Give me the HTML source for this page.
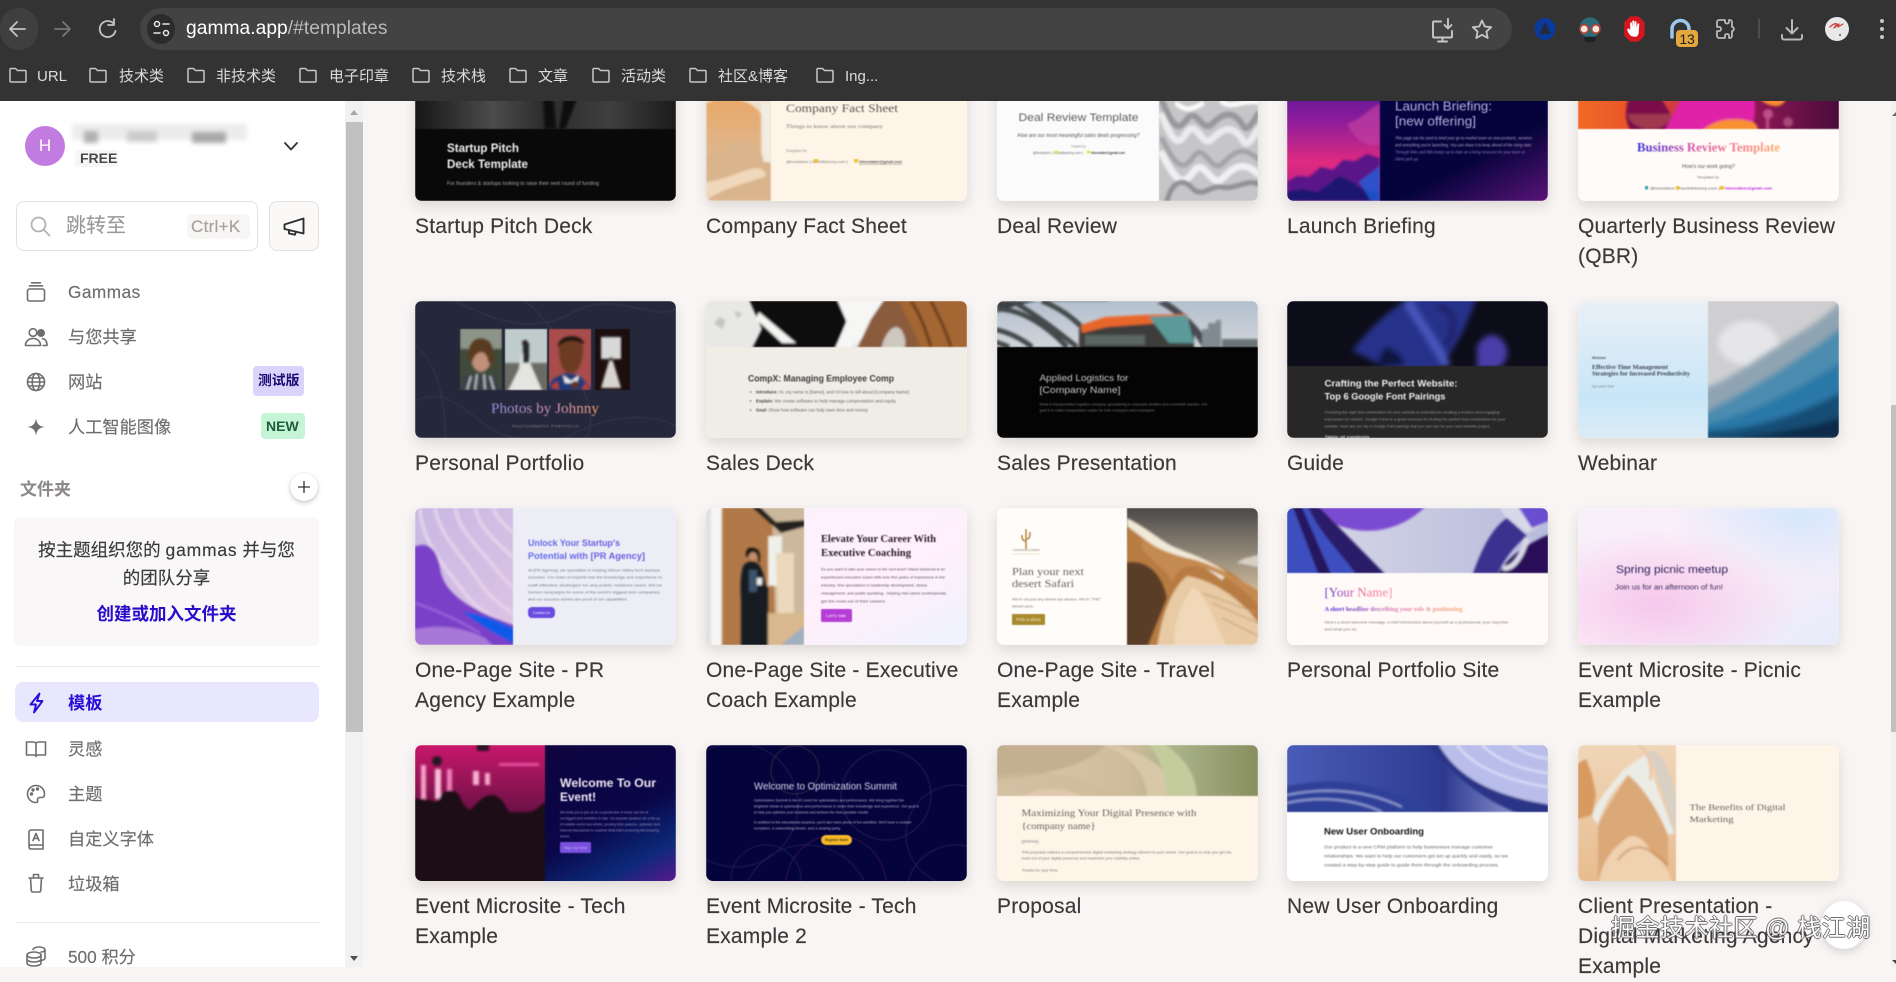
<!DOCTYPE html>
<html lang="zh">
<head>
<meta charset="utf-8">
<title>gamma.app/#templates</title>
<style>
*{box-sizing:border-box}
html,body{margin:0;padding:0;width:1896px;height:967px;overflow:hidden;background:#f8f5f4;font-family:"Liberation Sans","Noto Sans CJK SC",sans-serif}
.a{position:absolute}
.t{position:absolute;white-space:nowrap;line-height:24px}
.bm{position:absolute;top:65px;color:#dcdcdc;font-size:15px;line-height:24px;white-space:nowrap}
.fd{position:absolute;top:65px;width:20px;height:20px}
.nav{position:absolute;left:68px;font-size:17.200px;line-height:24px;color:#6f6d6c;white-space:nowrap;-webkit-text-stroke:.15px #6f6d6c}
.ic{position:absolute;left:24px;width:24px;height:24px;fill:none;stroke:#6e6e6e;stroke-width:1.6;stroke-linecap:round;stroke-linejoin:round}
.c{position:absolute;width:261px;height:137px;border-radius:7px;overflow:hidden;box-shadow:0 5px 12px rgba(60,40,30,.14)}
.c>svg{display:block;width:261px;height:137px;filter:blur(.4px)}
.l{position:absolute;width:270px;font-size:21px;letter-spacing:.2px;line-height:30px;color:#3b3838;white-space:nowrap;-webkit-text-stroke:.15px #3b3838}
svg text{font-family:"Liberation Sans",sans-serif}
svg text.f{font-family:"Liberation Serif",serif}
</style>
</head>
<body>
<svg width="0" height="0" style="position:absolute">
<defs>
<filter id="b" x="-5%" y="-5%" width="110%" height="110%"><feGaussianBlur stdDeviation="1.100"/></filter>
<filter id="b2" x="-10%" y="-10%" width="120%" height="120%"><feGaussianBlur stdDeviation="3"/></filter>
<linearGradient id="g1" x1="0" x2="1" y1="0" y2="0"><stop offset="0" stop-color="#161616"/><stop offset=".3" stop-color="#4c4c4c"/><stop offset=".5" stop-color="#2b2b2b"/><stop offset=".75" stop-color="#3f3f3f"/><stop offset="1" stop-color="#1b1b1b"/></linearGradient>
<linearGradient id="g2" x1="0" x2="0" y1="0" y2="1"><stop offset="0" stop-color="#e8a868"/><stop offset=".6" stop-color="#dfb68c"/><stop offset="1" stop-color="#c9a078"/></linearGradient>
<linearGradient id="g3" x1="0" x2="1" y1="0" y2="1"><stop offset="0" stop-color="#06054a"/><stop offset=".7" stop-color="#04033a"/><stop offset="1" stop-color="#5a1478"/></linearGradient>
<linearGradient id="g4" x1="0" x2="0" y1="0" y2="1"><stop offset="0" stop-color="#3a1490"/><stop offset=".4" stop-color="#8a1c9c"/><stop offset=".72" stop-color="#e02a80"/><stop offset="1" stop-color="#a8208c"/></linearGradient>
<linearGradient id="g5" x1="0" x2="1" y1="0" y2="0"><stop offset="0" stop-color="#f06a24"/><stop offset=".25" stop-color="#e8502c"/><stop offset=".55" stop-color="#a81c60"/><stop offset="1" stop-color="#4a0c3c"/></linearGradient>
<linearGradient id="g6" x1="0" x2="1" y1="0" y2="0"><stop offset="0" stop-color="#3b33d8"/><stop offset=".4" stop-color="#d85aa8"/><stop offset=".7" stop-color="#f47f90"/><stop offset="1" stop-color="#fbb070"/></linearGradient>
<linearGradient id="g7" x1="0" x2="1" y1="0" y2="0"><stop offset="0" stop-color="#8f8fd8"/><stop offset=".6" stop-color="#d08cb0"/><stop offset="1" stop-color="#e8a070"/></linearGradient>
<linearGradient id="g8" x1="0" x2="0" y1="0" y2="1"><stop offset="0" stop-color="#eaf0f6"/><stop offset=".7" stop-color="#c8e6f8"/><stop offset="1" stop-color="#dcecf6"/></linearGradient>
<linearGradient id="g10" x1="0" x2="1" y1="0" y2="0"><stop offset="0" stop-color="#6470e8"/><stop offset="1" stop-color="#6a5ae0"/></linearGradient>
<linearGradient id="g11" x1="0" x2="1" y1="0" y2="0"><stop offset="0" stop-color="#5a3ad0"/><stop offset=".6" stop-color="#f070a0"/><stop offset="1" stop-color="#f890a0"/></linearGradient>
<linearGradient id="g12" x1="0" x2="1" y1="0" y2="0"><stop offset="0" stop-color="#3a2ad8"/><stop offset=".5" stop-color="#e07ab0"/><stop offset="1" stop-color="#f8a870"/></linearGradient>
<linearGradient id="g13" x1="0" x2="1" y1="0" y2="1"><stop offset="0" stop-color="#f7f0fc"/><stop offset=".5" stop-color="#fdeef8"/><stop offset="1" stop-color="#e6ecfb"/></linearGradient>
<radialGradient id="g14" cx=".3" cy=".7" r=".55"><stop offset="0" stop-color="#f6c8ec"/><stop offset="1" stop-color="#f6c8ec" stop-opacity="0"/></radialGradient>
<radialGradient id="g15" cx=".85" cy=".05" r=".5"><stop offset="0" stop-color="#d6e8fc"/><stop offset="1" stop-color="#d6e8fc" stop-opacity="0"/></radialGradient>
<linearGradient id="g16" x1="0" x2="0" y1="0" y2="1"><stop offset="0" stop-color="#c8186c"/><stop offset=".55" stop-color="#601040"/><stop offset="1" stop-color="#2a0a1e"/></linearGradient>
<linearGradient id="g17" x1="0" x2="1" y1="0" y2="1"><stop offset="0" stop-color="#12043a"/><stop offset=".65" stop-color="#0a0648"/><stop offset=".85" stop-color="#0c2a78"/><stop offset="1" stop-color="#5a1890"/></linearGradient>
<linearGradient id="g18" x1="0" x2="1" y1="0" y2="0"><stop offset="0" stop-color="#d8c8a8"/><stop offset=".5" stop-color="#d0bc9c"/><stop offset=".7" stop-color="#a8b088"/><stop offset="1" stop-color="#888f5e"/></linearGradient>
<linearGradient id="g19" x1="0" x2="1" y1="0" y2="0"><stop offset="0" stop-color="#4a5cb8"/><stop offset=".6" stop-color="#2e3a90"/><stop offset="1" stop-color="#b0b8e8"/></linearGradient>
<linearGradient id="g20" x1="0" x2="0" y1="0" y2="1"><stop offset="0" stop-color="#4a4a4a"/><stop offset=".6" stop-color="#cbb89c"/><stop offset="1" stop-color="#f4ead8"/></linearGradient>
<linearGradient id="g21" x1="0" x2="1" y1="0" y2="1"><stop offset="0" stop-color="#fdf0ff"/><stop offset=".6" stop-color="#fff0fb"/><stop offset="1" stop-color="#eef4ff"/></linearGradient>
<linearGradient id="g22" x1="0" x2="1" y1="0" y2="1"><stop offset="0" stop-color="#c8b8e4"/><stop offset="1" stop-color="#dcc4e4"/></linearGradient>
<linearGradient id="g23" x1="0" x2="0" y1="0" y2="1"><stop offset="0" stop-color="#b4c0ce"/><stop offset="1" stop-color="#d0d4da"/></linearGradient>
<linearGradient id="g25" x1="0" x2="1" y1="0" y2="0"><stop offset="0" stop-color="#d8d8e8"/><stop offset="1" stop-color="#b8bcdc"/></linearGradient>
<linearGradient id="g26" x1="0" x2="0" y1="0" y2="1"><stop offset="0" stop-color="#f0d6b8"/><stop offset="1" stop-color="#e8bc90"/></linearGradient>
</defs>
</svg>

<div class="c" style="left:415px;top:64px"><svg viewBox="0 0 261 137">
<rect width="261" height="137" fill="#090909"/>
<svg width="261" height="65" viewBox="0 0 261 65"><rect width="261" height="65" fill="url(#g1)"/><g filter="url(#b)"><path d="M128 30h10l3 35h-11zM150 30h14l-14 35h-6z" fill="#080808"/></g></svg>
<text x="32" y="88" font-size="11.500" font-weight="700" fill="#f0f0f0" textLength="72" lengthAdjust="spacingAndGlyphs">Startup Pitch</text>
<text x="32" y="104" font-size="11.500" font-weight="700" fill="#f0f0f0" textLength="81" lengthAdjust="spacingAndGlyphs">Deck Template</text>
<text x="32" y="121" font-size="5.500" fill="#a8a8a8" textLength="152" lengthAdjust="spacingAndGlyphs">For founders &amp; startups looking to raise their next round of funding</text>
</svg></div>
<div class="c" style="left:706px;top:64px"><svg viewBox="0 0 261 137">
<rect width="261" height="137" fill="#fef5e8"/>
<svg width="65" height="137" viewBox="0 0 65 137"><rect width="65" height="137" fill="#efe0cc"/><g filter="url(#b)">
<path d="M0 40C15 30 45 34 55 50V100C35 118 15 118 0 124z" fill="url(#g2)"/><path d="M0 100C15 85 30 75 40 78C50 82 55 92 65 100V137H0z" fill="#d9b48c"/><path d="M0 118C20 116 35 106 50 104C56 104 60 108 60 112C40 120 15 124 0 137z" fill="#f0d8bc"/><path d="M55 38h10v60h-8z" fill="#f2ece2"/></g></svg>
<text class="f" x="80" y="48" font-size="12" fill="#5a5650" textLength="112" lengthAdjust="spacingAndGlyphs">Company Fact Sheet</text>
<text class="f" x="80" y="64" font-size="5.500" fill="#77736c" textLength="97" lengthAdjust="spacingAndGlyphs">Things to know about our company</text>
<text class="f" x="80" y="88" font-size="4" fill="#888" textLength="21" lengthAdjust="spacingAndGlyphs">Template by</text>
<text x="80" y="99" font-size="3.600" fill="#777" textLength="62" lengthAdjust="spacingAndGlyphs">@lovelabor | havitdfactory.com |</text>
<rect x="108" y="95" width="4" height="3.500" fill="#f0c030"/><rect x="148" y="95" width="4" height="3.500" fill="#f0c030"/>
<text x="153" y="99" font-size="3.600" font-weight="700" fill="#555" textLength="43" lengthAdjust="spacingAndGlyphs" text-decoration="underline">hilovelabor@gmail.com</text>
</svg></div>
<div class="c" style="left:997px;top:64px"><svg viewBox="0 0 261 137">
<rect width="261" height="137" fill="#fbfbfb"/>
<svg x="162" width="99" height="137" viewBox="162 0 99 137"><rect x="162" width="99" height="137" fill="#c6c6c9"/><g filter="url(#b)" fill="none" stroke-linecap="round">
<path d="M165 37C175 60 180 70 190 55C200 42 205 70 215 60C225 50 235 45 245 60C250 70 255 60 261 50" stroke="#98989c" stroke-width="6"/>
<path d="M165 52C175 75 180 85 190 68C200 55 205 85 215 75C225 65 235 60 245 75C250 85 255 75 261 65" stroke="#ebebed" stroke-width="7"/>
<path d="M165 75C178 100 185 110 197 92C207 78 215 110 225 100C235 90 245 80 261 95" stroke="#a4a4a8" stroke-width="5"/>
<path d="M165 90C178 115 185 125 197 107C207 93 215 125 225 115C235 105 245 95 261 110" stroke="#f0f0f2" stroke-width="7"/>
<path d="M170 137C175 118 185 113 195 124C205 135 215 120 225 123C238 126 250 115 261 120" stroke="#909094" stroke-width="5"/>
<path d="M180 40C190 48 195 45 205 40M225 38C235 45 245 36 261 38" stroke="#fafafa" stroke-width="5"/>
</g></svg>
<text x="81.500" y="57" text-anchor="middle" font-size="11" fill="#5e5e5e" textLength="120" lengthAdjust="spacingAndGlyphs">Deal Review Template</text>
<text x="81.500" y="73" text-anchor="middle" font-size="5.500" font-style="italic" fill="#555" textLength="122" lengthAdjust="spacingAndGlyphs">How are our most meaningful sales deals progressing?</text>
<text x="81.500" y="83.500" text-anchor="middle" font-size="3.500" fill="#888" textLength="15" lengthAdjust="spacingAndGlyphs">Created by</text>
<text x="36" y="90" font-size="3.500" fill="#666" textLength="50" lengthAdjust="spacingAndGlyphs">@lovelabor | havitdfactory.com |</text>
<rect x="58" y="86.500" width="3" height="3" fill="#e8e040"/><rect x="90" y="86.500" width="3" height="3" fill="#e8e040"/>
<text x="94" y="90" font-size="3.500" font-weight="700" fill="#444" textLength="34" lengthAdjust="spacingAndGlyphs">hilovelabor@gmail.com</text>
</svg></div>
<div class="c" style="left:1287px;top:64px"><svg viewBox="0 0 261 137">
<rect width="261" height="137" fill="url(#g3)"/>
<svg width="93" height="137" viewBox="0 0 93 137"><rect width="93" height="137" fill="url(#g4)"/><g filter="url(#b)">
<path d="M60 60C75 55 85 42 93 40V80C85 85 70 80 60 60z" fill="#c040a0" opacity=".7"/>
<path d="M0 118L10 112 22 113 34 103 46 106 56 96 68 97 80 90 93 94V137H0z" fill="#5a1888"/>
<path d="M0 128L15 125 30 128 42 120 52 112 62 116 74 124 93 130V137H0z" fill="#1c1670"/><path d="M72 118L93 102V137H84z" fill="#2064e0" opacity=".75"/></g></svg>
<text x="108" y="46.500" font-size="12.500" fill="#b4aedc" textLength="97" lengthAdjust="spacingAndGlyphs">Launch Briefing:</text>
<text x="108" y="61.500" font-size="12.500" fill="#b4aedc" textLength="81" lengthAdjust="spacingAndGlyphs">[new offering]</text>
<g font-size="4.200" font-style="italic" fill="#b4a0c8">
<text x="108" y="75.500" textLength="137" lengthAdjust="spacingAndGlyphs">This page can be used to brief your go-to-market team on new products, services</text>
<text x="108" y="82.500" textLength="137" lengthAdjust="spacingAndGlyphs">and everything you're launching. You can share it to keep ahead of the rising start.</text>
<text x="108" y="89.500" textLength="130" lengthAdjust="spacingAndGlyphs" fill="#8a78b8">Through links and little keeps up to date as a living resource for your team or</text>
<text x="108" y="96.500" textLength="24" lengthAdjust="spacingAndGlyphs" fill="#8a78b8">client pick up.</text>
</g>
</svg></div>
<div class="c" style="left:1578px;top:64px"><svg viewBox="0 0 261 137">
<rect width="261" height="137" fill="#fffbf8"/>
<svg width="261" height="65" viewBox="0 0 261 65"><rect width="261" height="65" fill="url(#g5)"/><g filter="url(#b)">
<path d="M80 30C90 45 100 60 95 70H55C42 55 50 30 55 30z" fill="#7a1048"/><path d="M50 50h44c0 8-10 15-22 15s-22-7-22-15z" fill="#a03850"/>
<path d="M85 70C95 50 105 30 108 30H175C180 50 175 60 170 70z" fill="#e020a8"/>
<path d="M120 70C135 55 155 52 175 58C182 62 180 70 178 70z" fill="#f89030"/><path d="M175 30C188 42 205 50 210 30z" fill="#f88a30"/>
<circle cx="190" cy="50" r="5" fill="#c05088"/><circle cx="210" cy="58" r="5" fill="#a84878"/><rect x="188" y="50" width="3" height="15" fill="#c05088"/></g></svg>
<text class="f" x="59" y="87.500" font-size="13" font-weight="700" fill="url(#g6)" textLength="143" lengthAdjust="spacingAndGlyphs">Business Review Template</text>
<text x="104" y="104" font-size="5" fill="#555" textLength="53" lengthAdjust="spacingAndGlyphs">How's our work going?</text>
<text x="119" y="114.500" font-size="3.500" fill="#777" textLength="22" lengthAdjust="spacingAndGlyphs">Templated by</text>
<text x="72" y="125.500" font-size="3.500" fill="#666" textLength="70" lengthAdjust="spacingAndGlyphs">@lovelabor | havitdfactory.com |</text>
<rect x="67" y="122" width="3" height="3.500" fill="#40a0a0"/><rect x="98" y="122" width="3.500" height="3.500" fill="#f0c030"/><rect x="142" y="122" width="4" height="3.500" fill="#f0c030"/>
<text x="147" y="125.500" font-size="3.500" font-weight="700" fill="#c020e0" textLength="47" lengthAdjust="spacingAndGlyphs">hilovelabor@gmail.com</text>
</svg></div>

<div class="c" style="left:415px;top:301px"><svg viewBox="0 0 261 137">
<rect width="261" height="137" fill="#25273a"/>
<g fill="none" stroke="#383b52" stroke-width=".8"><path d="M0 44C20 60 30 90 30 137M40 0C80 20 120 35 160 10 200 -10 240 20 261 8M110 0C150 30 190 120 170 137M0 100C40 80 60 130 100 137M150 137C190 115 230 110 261 125"/></g>
<svg x="45" y="28" width="42" height="61" viewBox="45 28 42 61"><rect x="45" y="28" width="42" height="61" fill="#3f4a3a"/><g filter="url(#b)"><rect x="45" y="24" width="42" height="24" fill="#8c9488"/><ellipse cx="66" cy="57" rx="10" ry="14" fill="#c09078"/><path d="M53 58C52 40 62 35 70 38C80 40 80 58 78 68L73 60C72 48 60 48 57 62z" fill="#5a3a22"/><path d="M44 92L50 74 64 72 78 74 88 92z" fill="#39404a"/><path d="M52 89l4-14M60 89l2-16M70 89l-1-16M79 89l-4-14" stroke="#dcdcdc" stroke-width="1.400"/></g></svg>
<svg x="90" y="28" width="42" height="61" viewBox="90 28 42 61"><rect x="90" y="28" width="42" height="61" fill="#c0cccc"/><g filter="url(#b)"><rect x="88" y="62" width="46" height="29" fill="#6a6c64"/><path d="M106 54L112 50 115 62 128 92H92L104 68z" fill="#e4e4e0"/><rect x="108" y="42" width="6" height="20" fill="#24262c"/><circle cx="110" cy="42" r="3" fill="#2c2422"/></g></svg>
<svg x="134" y="28" width="42" height="61" viewBox="134 28 42 61"><rect x="134" y="28" width="42" height="61" fill="#a84c4c"/><g filter="url(#b)"><path d="M144 48C144 34 168 34 168 48C168 66 160 74 154 72C148 72 144 60 144 48z" fill="#6c3a24"/><path d="M143 46C143 32 169 32 169 44C162 38 150 38 143 46z" fill="#1a1210"/><path d="M130 92L138 78 150 72 164 74 180 92z" fill="#1e3a78"/><path d="M148 74l8 6 8-6-2 8h-12z" fill="#f0f0f0"/><circle cx="160" cy="84" r="4" fill="#5c3020"/><path d="M136 86l6-6 2 9zM170 82l5 7h-8z" fill="#c04020"/></g></svg>
<svg x="180" y="28" width="35" height="61" viewBox="180 28 35 61"><rect x="180" y="28" width="35" height="61" fill="#1c0e0e"/><g filter="url(#b)"><rect x="186" y="36" width="20" height="22" fill="#d8d8d8"/><path d="M194 60h4l8 27h-20z" fill="#d8d4d0"/><circle cx="196" cy="58" r="2" fill="#4a3a30"/></g></svg>
<text class="f" x="76" y="112" font-size="14.500" fill="url(#g7)" textLength="108" lengthAdjust="spacingAndGlyphs">Photos by Johnny</text>
<text x="97" y="126.500" font-size="4" fill="#8e8e96" textLength="67" lengthAdjust="spacing">PHOTOGRAPHY PORTFOLIO</text>
</svg></div>
<div class="c" style="left:706px;top:301px"><svg viewBox="0 0 261 137">
<rect width="261" height="137" fill="#f0ede6"/>
<svg width="261" height="46" viewBox="0 0 261 46"><rect width="261" height="46" fill="#e8e8e6"/><g filter="url(#b)">
<path d="M8 22l6-6 6 4-4 8zM28 10l8 2-4 6z" fill="#c4c4c2"/>
<path d="M42 -4L67 -4 130 -4 140 20 128 50H45L56 28z" fill="#0e0e0e"/><path d="M53 11L90 42H76L50 18z" fill="#f4f4f2"/>
<path d="M130 -4H190L158 35 140 50H128L142 22z" fill="#f6f6f4"/>
<path d="M150 50L165 18 180 -4H265V50z" fill="#8a5c3c"/><path d="M190 -4C200 15 210 30 215 50H265V-4z" fill="#a46630"/><path d="M175 50C178 30 190 20 196 30C200 38 200 42 198 50z" fill="#cfc8c0"/><path d="M205 0C215 15 220 30 225 46M225 0C235 20 240 30 245 46" stroke="#6a3c1c" stroke-width="3" fill="none"/></g></svg>
<text x="42" y="80.500" font-size="9.500" font-weight="700" fill="#3a3a3a" textLength="146" lengthAdjust="spacingAndGlyphs">CompX: Managing Employee Comp</text>
<g font-size="4.500" fill="#666"><circle cx="44.500" cy="91" r=".8"/><circle cx="44.500" cy="100" r=".8"/><circle cx="44.500" cy="109" r=".8"/>
<text x="50" y="92.500" textLength="153" lengthAdjust="spacingAndGlyphs"><tspan font-weight="700" fill="#444">Introduce:</tspan> Hi, my name is [Name], and I'd love to tell about [Company Name]</text>
<text x="50" y="101.500" textLength="140" lengthAdjust="spacingAndGlyphs"><tspan font-weight="700" fill="#444">Explain:</tspan> We create software to help manage compensation and equity</text>
<text x="50" y="110.500" textLength="112" lengthAdjust="spacingAndGlyphs"><tspan font-weight="700" fill="#444">Goal:</tspan> Show how software can help save time and money</text>
</g>
</svg></div>
<div class="c" style="left:997px;top:301px"><svg viewBox="0 0 261 137">
<rect width="261" height="137" fill="#040404"/>
<svg width="261" height="46" viewBox="0 0 261 46"><rect width="261" height="46" fill="url(#g23)"/><g filter="url(#b)">
<path d="M0 12C35 -5 90 -5 115 0H0z" fill="#3a3e40"/>
<g stroke="#43484a" stroke-width="5" fill="none"><path d="M0 8C25 8 50 25 70 46M15 0C40 14 60 30 80 46M45 0C70 10 88 26 100 46M-5 28C10 30 25 38 35 46M-5 40C2 42 8 44 12 46"/></g>
<path d="M170 0C190 12 205 30 215 46H205C195 28 180 12 160 2z" fill="#4a4c52"/>
<path d="M82 28L108 18 190 15 197 34V50H82z" fill="#3e3e3a"/><path d="M84 24L108 16 145 14 190 13 192 20 110 26 85 32z" fill="#e8662a"/><path d="M152 16L190 14 197 42 172 42z" fill="#5a9a98"/><path d="M88 34h60v10H88z" fill="#5a6664"/>
<path d="M205 50V28h6v-6h8v-3h5v31z" fill="#808a90"/><rect x="225" y="38" width="36" height="12" fill="#6a7478"/></g></svg>
<text x="42.500" y="80" font-size="9" fill="#c8c8c8" textLength="89" lengthAdjust="spacingAndGlyphs">Applied Logistics for</text>
<text x="42.500" y="92" font-size="9" fill="#c8c8c8" textLength="81" lengthAdjust="spacingAndGlyphs">[Company Name]</text>
<text x="42.500" y="104.500" font-size="3.800" fill="#777" textLength="168" lengthAdjust="spacingAndGlyphs">What is transportation logistics company specializing in corporate shuttles and commuter transits. Our</text>
<text x="42.500" y="110.500" font-size="3.800" fill="#777" textLength="116" lengthAdjust="spacingAndGlyphs">goal is to make transportation easier for both employers and employees.</text>
</svg></div>
<div class="c" style="left:1287px;top:301px"><svg viewBox="0 0 261 137">
<rect width="261" height="137" fill="#272727"/>
<svg width="261" height="65" viewBox="0 0 261 65"><rect width="261" height="65" fill="#0d0d1a"/><g filter="url(#b2)">
<path d="M65 50C85 25 95 15 125 -5H190C180 25 170 45 150 70H100C90 60 75 55 65 50z" fill="#26308a"/><path d="M120 0C135 25 150 45 160 65" stroke="#4a58c0" stroke-width="8" fill="none"/>
<path d="M190 45C200 28 215 32 220 48 222 58 215 68 205 68H190z" fill="#4a3ca8"/>
<path d="M100 45C115 55 120 60 115 65H90C92 55 95 50 100 45z" fill="#10143c"/><path d="M150 5C170 10 170 30 158 45" stroke="#1a2468" stroke-width="6" fill="none"/></g></svg>
<text x="37.500" y="85.500" font-size="9.500" font-weight="700" fill="#f0f0f0" textLength="133" lengthAdjust="spacingAndGlyphs">Crafting the Perfect Website:</text>
<text x="37.500" y="98.500" font-size="9.500" font-weight="700" fill="#f0f0f0" textLength="121" lengthAdjust="spacingAndGlyphs">Top 6 Google Font Pairings</text>
<g font-size="3.900" fill="#959595">
<text x="37.500" y="112.500" textLength="175" lengthAdjust="spacingAndGlyphs">Choosing the right font combination for your website is essential for creating a modern and engaging</text>
<text x="37.500" y="119.500" textLength="181" lengthAdjust="spacingAndGlyphs">impression for visitors. Google Fonts is a great resource for finding the perfect font combination for your</text>
<text x="37.500" y="126.500" textLength="166" lengthAdjust="spacingAndGlyphs">website. Here are our top 6 Google Font pairings that you can use for your next website project.</text>
<text x="37.500" y="137" font-weight="700" fill="#cfcfcf" textLength="45" lengthAdjust="spacingAndGlyphs">Table of contents</text>
</g>
</svg></div>
<div class="c" style="left:1578px;top:301px"><svg viewBox="0 0 261 137">
<rect width="130" height="137" fill="url(#g8)"/>
<svg x="130" width="131" height="137" viewBox="130 0 131 137"><rect x="130" width="131" height="137" fill="#cfcfd1"/><g filter="url(#b2)">
<ellipse cx="170" cy="42" rx="30" ry="22" fill="#e6e6e8"/>
<path d="M125 88C160 75 180 55 200 45 225 30 250 15 265 -2V140H125z" fill="#8fa4b2"/>
<path d="M125 112C170 90 220 60 265 25V140H125z" fill="#4c8cb0"/>
<path d="M125 124C170 115 225 85 265 60V140H125z" fill="#2a78a8"/>
<path d="M125 130C175 130 230 110 265 90V140H125z" fill="#184e74"/>
<path d="M125 140C190 135 240 125 265 115V140z" fill="#0c2c48"/>
</g></svg>
<text x="14" y="58" font-size="3.600" font-weight="700" fill="#555" textLength="14" lengthAdjust="spacingAndGlyphs">Webinar</text>
<text class="f" x="14" y="68" font-size="5.800" font-weight="700" fill="#3a444c" textLength="76" lengthAdjust="spacingAndGlyphs">Effective Time Management</text>
<text class="f" x="14" y="74.500" font-size="5.800" font-weight="700" fill="#3a444c" textLength="98" lengthAdjust="spacingAndGlyphs">Strategies for Increased Productivity</text>
<text x="14" y="86.500" font-size="3.800" fill="#6a7a86" textLength="22" lengthAdjust="spacingAndGlyphs">by Lorem Doe</text>
</svg></div>

<div class="c" style="left:415px;top:508px"><svg viewBox="0 0 261 137">
<rect width="261" height="137" fill="#ededf6"/>
<svg width="98" height="137" viewBox="0 0 98 137"><rect width="98" height="137" fill="url(#g22)"/><g filter="url(#b)">
<g fill="none" stroke="#e6d2ea" stroke-width="3.500"><path d="M20 0C25 30 50 50 65 75 75 90 90 100 98 105M40 0C45 25 65 40 80 60 88 70 94 75 98 80M60 0C65 20 78 30 90 42L98 50M5 0C5 30 30 60 50 85 60 100 80 112 98 118M78 0C82 10 90 18 98 24"/></g>
<path d="M-3 40C12 32 22 40 25 60 28 85 55 100 80 110L101 118V140H-3z" fill="#7a3fc8"/>
<path d="M-3 122C25 115 50 120 70 130L80 140H-3z" fill="#a878d8"/><path d="M0 95C15 100 40 110 65 125" stroke="#9a68d8" stroke-width="2" fill="none"/>
<path d="M48 104C65 106 85 113 101 122V137C85 128 65 118 48 104z" fill="#0a5ae8"/></g></svg>
<text x="113" y="38" font-size="9.200" font-weight="700" fill="url(#g10)" textLength="92" lengthAdjust="spacingAndGlyphs">Unlock Your Startup's</text>
<text x="113" y="51" font-size="9.200" font-weight="700" fill="url(#g10)" textLength="117" lengthAdjust="spacingAndGlyphs">Potential with [PR Agency]</text>
<g font-size="4" fill="#77778a">
<text x="113" y="63.500" textLength="132" lengthAdjust="spacingAndGlyphs">At [PR Agency], we specialize in helping Silicon Valley tech startups</text>
<text x="113" y="70.500" textLength="134" lengthAdjust="spacingAndGlyphs">succeed. Our team of experts has the knowledge and experience to</text>
<text x="113" y="78.500" textLength="134" lengthAdjust="spacingAndGlyphs">craft effective strategies for any public relations need. We've</text>
<text x="113" y="85.500" textLength="133" lengthAdjust="spacingAndGlyphs">formed campaigns for some of the world's biggest tech companies,</text>
<text x="113" y="92.500" textLength="100" lengthAdjust="spacingAndGlyphs">and our success stories are proof of our capabilities.</text>
</g>
<rect x="113" y="99" width="27" height="11" rx="4" fill="#6a4ce0"/><text x="118" y="105.800" font-size="3.500" fill="#fff" textLength="17" lengthAdjust="spacingAndGlyphs">Contact Us</text>
</svg></div>
<div class="c" style="left:706px;top:508px"><svg viewBox="0 0 261 137">
<rect width="261" height="137" fill="url(#g21)"/>
<svg width="98" height="137" viewBox="0 0 98 137"><rect width="98" height="137" fill="#b27848"/><g filter="url(#b)">
<rect x="-3" y="-3" width="8" height="143" fill="#e0e0e0"/><rect x="5" y="-3" width="11" height="143" fill="#f6f6f6"/>
<path d="M44 -3L101 -3V140H70L66 12z" fill="#ccb89c"/><rect x="62" y="28" width="14" height="50" fill="#eef0ea"/><path d="M44 -3L75 25 101 18V12L70 14 52 -3z" fill="#24201e"/>
<path d="M70 45h18v80H72z" fill="#ecd8bc"/><rect x="60" y="105" width="40" height="35" fill="#d8b88c"/><path d="M75 137L98 118V137z" fill="#a0b0c0"/>
<rect x="35" y="78" width="27" height="62" fill="#181c22"/><path d="M36 62C38 50 52 52 55 60 60 70 62 90 60 100L36 100C34 85 34 72 36 62z" fill="#181c22"/><ellipse cx="47" cy="45" rx="5" ry="7" fill="#c09070"/><path d="M40 48C38 36 54 36 54 48 54 56 52 58 52 50 50 42 44 42 42 50z" fill="#1a120e"/><rect x="43" y="62" width="8" height="22" fill="#3e526a"/><rect x="51" y="70" width="5" height="7" fill="#eee"/></g></svg>
<text class="f" x="115" y="34" font-size="10.500" font-weight="700" fill="#2a1c26" textLength="115" lengthAdjust="spacingAndGlyphs">Elevate Your Career With</text>
<text class="f" x="115" y="48" font-size="10.500" font-weight="700" fill="#2a1c26" textLength="90" lengthAdjust="spacingAndGlyphs">Executive Coaching</text>
<g font-size="4" fill="#5a4a5a">
<text x="115" y="62.500" textLength="124" lengthAdjust="spacingAndGlyphs">Do you want to take your career to the next level? Maria Sandoval is an</text>
<text x="115" y="70.500" textLength="124" lengthAdjust="spacingAndGlyphs">experienced executive coach with over five years of experience in the</text>
<text x="115" y="78.500" textLength="106" lengthAdjust="spacingAndGlyphs">industry. She specializes in leadership development, stress</text>
<text x="115" y="86.500" textLength="125" lengthAdjust="spacingAndGlyphs">management, and public speaking - helping mid-career professionals</text>
<text x="115" y="94.500" textLength="65" lengthAdjust="spacingAndGlyphs">get the most out of their careers.</text>
</g>
<rect x="115" y="101" width="31" height="13" rx="1.500" fill="#b53fd6"/><text x="120" y="108.800" font-size="3.800" fill="#fff" textLength="20" lengthAdjust="spacingAndGlyphs">Let's talk</text>
</svg></div>
<div class="c" style="left:997px;top:508px"><svg viewBox="0 0 261 137">
<rect width="261" height="137" fill="#fefdfa"/>
<svg x="130" width="131" height="137" viewBox="130 0 131 137"><rect x="130" width="131" height="137" fill="url(#g20)"/><g filter="url(#b)">
<path d="M130 10C155 25 165 40 190 45 215 55 240 60 265 95V140H130z" fill="#b87c42"/>
<path d="M130 10C150 20 160 30 175 38 190 45 210 50 230 65L225 72C205 55 185 52 170 45 155 38 140 25 130 18z" fill="#f2ead8"/>
<path d="M145 40C155 55 170 60 175 75 180 60 190 55 205 60 225 65 240 75 265 100V85C240 70 215 55 190 50 170 45 155 38 145 30z" fill="#c48a50"/>
<path d="M126 55C150 50 165 65 170 90L150 140H126z" fill="#5a3e28"/>
<path d="M160 140C165 105 175 80 190 68 215 72 245 90 265 120V140z" fill="#e8cba4"/>
<path d="M178 140C175 115 185 95 195 80 205 80 215 105 230 140z" fill="#f0d8b8"/><path d="M215 95L261 115M205 85L261 105M225 110L261 128" stroke="#c49868" stroke-width="1"/>
<path d="M240 55C248 48 255 50 265 45V60z" fill="#d8d0c4"/></g></svg>
<g stroke="#b27a2e" fill="none" stroke-width="1.400"><path d="M29 21V41M29 33C25 33 25 30 25 27M29 31C33 31 33 28 33 24"/></g>
<text x="16" y="43" font-size="2.800" fill="#8a7a5a" textLength="27" lengthAdjust="spacingAndGlyphs">HAVAKUMA</text><path d="M16 46h27" stroke="#d8c8a8" stroke-width=".5"/>
<text class="f" x="15" y="67" font-size="11" fill="#676460" textLength="72" lengthAdjust="spacingAndGlyphs">Plan your next</text>
<text class="f" x="15" y="79" font-size="11" fill="#676460" textLength="62" lengthAdjust="spacingAndGlyphs">desert Safari</text>
<text x="15" y="92.500" font-size="3.800" font-style="italic" fill="#777" textLength="89" lengthAdjust="spacingAndGlyphs">We're not just any desert trip advisor. We're "THE"</text>
<text x="15" y="99.500" font-size="3.800" font-style="italic" fill="#777" textLength="22" lengthAdjust="spacingAndGlyphs">desert pros.</text>
<rect x="15" y="106" width="33" height="11" rx="1" fill="#a98a2d"/><text x="19" y="113" font-size="4.500" fill="#f2ecd8" textLength="25" lengthAdjust="spacingAndGlyphs">Pick a dune</text>
</svg></div>
<div class="c" style="left:1287px;top:508px"><svg viewBox="0 0 261 137">
<rect width="261" height="137" fill="#fffaf7"/>
<svg width="261" height="65" viewBox="0 0 261 65"><rect width="261" height="65" fill="url(#g25)"/><g filter="url(#b)">
<path d="M24 -3H140C120 18 90 28 60 20 40 15 30 8 24 -3z" fill="#7a4cd0"/>
<path d="M-3 -3H24C30 20 60 45 100 68H-3z" fill="#3e50c0"/><path d="M20 -3H30L100 68H70C55 45 35 30 20 -3z" fill="#2a1c68"/><path d="M5 -3H14L45 68H32z" fill="#261860"/>
<path d="M185 68C195 40 205 20 220 10L240 28C225 40 215 55 210 68z" fill="#3a3090"/><path d="M210 68C220 50 235 38 265 25V68z" fill="#2a0e58"/><path d="M218 8L240 25 265 12V-3H210z" fill="#d8d8e8"/><path d="M230 -3H265V12L245 20z" fill="#6a4ed0"/><path d="M216 60C225 62 235 50 240 30" stroke="#d8d8e8" stroke-width="5" fill="none"/></g></svg>
<text class="f" x="37.500" y="88.500" font-size="13" fill="url(#g11)" textLength="68" lengthAdjust="spacingAndGlyphs">[Your Name]</text>
<text class="f" x="37.500" y="103" font-size="6.500" font-weight="700" fill="url(#g12)" textLength="138" lengthAdjust="spacingAndGlyphs">A short headline describing your role &amp; positioning</text>
<text x="37.500" y="115.500" font-size="3.800" fill="#777" textLength="184" lengthAdjust="spacingAndGlyphs">Here's a short welcome message, a brief introduction about yourself as a professional, your expertise</text>
<text x="37.500" y="122.500" font-size="3.800" fill="#777" textLength="33" lengthAdjust="spacingAndGlyphs">and what you do.</text>
</svg></div>
<div class="c" style="left:1578px;top:508px"><svg viewBox="0 0 261 137">
<rect width="261" height="137" fill="url(#g13)"/><rect width="261" height="137" fill="url(#g14)"/><rect width="261" height="137" fill="url(#g15)"/>
<text x="38" y="65" font-size="11" fill="#2b1c58" textLength="112" lengthAdjust="spacingAndGlyphs">Spring picnic meetup</text>
<text x="37" y="81.500" font-size="7" fill="#3a2a5a" textLength="108" lengthAdjust="spacingAndGlyphs">Join us for an afternoon of fun!</text>
</svg></div>

<div class="c" style="left:415px;top:745px;height:136px"><svg viewBox="0 0 261 137">
<rect width="261" height="137" fill="url(#g17)"/>
<svg width="130" height="137" viewBox="0 0 130 137"><rect width="130" height="137" fill="url(#g16)"/><g filter="url(#b)">
<rect x="6" y="20" width="5" height="34" fill="#f4a0c8"/><rect x="20" y="24" width="6" height="30" fill="#f9c0dc"/><rect x="32" y="24" width="5" height="24" fill="#f080b8"/><rect x="58" y="26" width="6" height="14" fill="#f9b0d0"/><rect x="70" y="28" width="5" height="12" fill="#f9a8c8"/><rect x="84" y="18" width="40" height="3" fill="#e850a0"/>
<circle cx="22" cy="16" r="5" fill="#2a1420"/><rect x="62" y="-2" width="12" height="8" fill="#2a1420"/>
<path d="M-3 140V55C12 50 18 60 24 55 26 45 38 42 44 50 48 60 50 62 55 65 62 60 66 50 78 50 88 52 90 62 95 68 105 65 110 70 120 65L133 55V140z" fill="#1e0a16"/></g></svg>
<text x="145" y="42" font-size="11.500" font-weight="700" fill="#f0e8f4" textLength="96" lengthAdjust="spacingAndGlyphs">Welcome To Our</text>
<text x="145" y="56" font-size="11.500" font-weight="700" fill="#f0e8f4" textLength="36" lengthAdjust="spacingAndGlyphs">Event!</text>
<g font-size="4" fill="#9a92c0">
<text x="145" y="68.500" textLength="88" lengthAdjust="spacingAndGlyphs">We invite you to join us for a special time of music and fun at</text>
<text x="145" y="74.500" textLength="100" lengthAdjust="spacingAndGlyphs">our biggest tech exhibition to date. Our keynote speakers are a line-up</text>
<text x="145" y="80.500" textLength="100" lengthAdjust="spacingAndGlyphs">of notable event and artists, proving their passion, optimism and</text>
<text x="145" y="86.500" textLength="99" lengthAdjust="spacingAndGlyphs">informal discussions to examine what that's producing this amazing</text>
<text x="145" y="92.500" textLength="10" lengthAdjust="spacingAndGlyphs">event.</text>
</g>
<rect x="145" y="97" width="31" height="11" rx="1" fill="#7a50e0"/><text x="149" y="104" font-size="4" fill="#c8b8f8" textLength="23" lengthAdjust="spacingAndGlyphs">Sign Up Now</text>
</svg></div>
<div class="c" style="left:706px;top:745px;height:136px"><svg viewBox="0 0 261 137">
<rect width="261" height="137" fill="#05033c"/>
<g fill="none" stroke="#23245c" stroke-width=".8">
<circle cx="30" cy="60" r="62"/><circle cx="89" cy="25" r="24" stroke="#3a3440"/><circle cx="180" cy="50" r="45"/><circle cx="100" cy="165" r="65"/><circle cx="250" cy="90" r="50"/><circle cx="250" cy="150" r="50" stroke="#33234f"/><circle cx="130" cy="140" r="50" stroke="#3c1c4c"/><circle cx="60" cy="135" r="35"/>
</g>
<text x="48" y="44.500" font-size="10" fill="#d8d8ee" textLength="143" lengthAdjust="spacingAndGlyphs">Welcome to Optimization Summit</text>
<g font-size="4" fill="#b4b4d0">
<text x="48" y="56.500" textLength="150" lengthAdjust="spacingAndGlyphs">Optimization Summit is the #1 event for optimization and performance. We bring together the</text>
<text x="48" y="62.500" textLength="165" lengthAdjust="spacingAndGlyphs">brightest minds in optimization and performance to share their knowledge and experience. Our goal is</text>
<text x="48" y="68.500" textLength="115" lengthAdjust="spacingAndGlyphs">to help you optimize your business and achieve the best possible results.</text>
<text x="48" y="78.500" textLength="157" lengthAdjust="spacingAndGlyphs">In addition to the educational sessions, you'll also have plenty of fun activities. We'll have a cocktail</text>
<text x="48" y="84.500" textLength="87" lengthAdjust="spacingAndGlyphs">reception, a networking dinner, and a closing party.</text>
</g>
<rect x="115" y="90" width="31" height="10" rx="5" fill="#f4b829"/><text x="119" y="96.200" font-size="3.600" font-weight="700" fill="#4a3408" textLength="23" lengthAdjust="spacingAndGlyphs">Register Now!</text>
</svg></div>
<div class="c" style="left:997px;top:745px;height:136px"><svg viewBox="0 0 261 137">
<rect width="261" height="137" fill="#fef4e8"/>
<svg width="261" height="51" viewBox="0 0 261 51"><rect width="261" height="51" fill="url(#g18)"/><g filter="url(#b)">
<path d="M100 -3C150 5 175 25 182 55H150C150 25 130 8 100 -3z" fill="#d8c8a8"/><path d="M150 -3C165 15 168 30 170 55H200C200 30 190 15 165 -3z" fill="#c4cc9e"/><path d="M-3 -3H110C100 15 60 30 -3 35z" fill="#c4b090"/>
<path d="M20 55C40 40 70 40 90 55z" fill="#eed6bc"/><path d="M-3 30C30 25 80 25 130 55H-3z" fill="#cfb99c" opacity=".5"/></g></svg>
<text class="f" x="24.500" y="71" font-size="9" fill="#6a655c" textLength="175" lengthAdjust="spacingAndGlyphs">Maximizing Your Digital Presence with</text>
<text class="f" x="24.500" y="84" font-size="9" fill="#6a655c" textLength="74" lengthAdjust="spacingAndGlyphs">{company name}</text>
<text x="24.500" y="97.300" font-size="3.600" fill="#777" textLength="18" lengthAdjust="spacingAndGlyphs">{{Name}},</text>
<text x="24.500" y="108.300" font-size="3.600" fill="#777" textLength="210" lengthAdjust="spacingAndGlyphs">This proposal outlines a comprehensive digital marketing strategy tailored to your needs. Our goal is to help you get the</text>
<text x="24.500" y="114.300" font-size="3.600" fill="#777" textLength="119" lengthAdjust="spacingAndGlyphs">most out of your digital presence and maximize your visibility online.</text>
<text x="24.500" y="126.300" font-size="3.600" fill="#777" textLength="37" lengthAdjust="spacingAndGlyphs">Thanks for your time.</text>
</svg></div>
<div class="c" style="left:1287px;top:745px;height:136px"><svg viewBox="0 0 261 137">
<rect width="261" height="137" fill="#fff"/>
<svg width="261" height="67" viewBox="0 0 261 67"><rect width="261" height="67" fill="url(#g19)"/><g filter="url(#b)">
<path d="M150 -3C165 25 195 50 265 60V-3z" fill="#b9bdea"/><path d="M170 0C185 20 215 35 261 42M195 0C210 15 235 25 261 28M225 0C235 8 250 12 261 14" stroke="#e0e2f8" stroke-width="2" fill="none"/>
<path d="M150 -3C165 25 195 50 265 60V70H235C195 55 165 30 140 -3z" fill="#2a3488"/>
<path d="M-3 42C40 32 80 35 120 55 135 62 150 65 160 70H-3z" fill="#2f4098"/><path d="M0 50C40 42 80 45 115 62M0 58C35 50 70 55 95 67" stroke="#a8b4e4" stroke-width="1.500" fill="none"/></g></svg>
<text x="37" y="89.500" font-size="9.500" font-weight="700" fill="#111" textLength="100" lengthAdjust="spacingAndGlyphs">New User Onboarding</text>
<g font-size="4.200" fill="#666">
<text x="37" y="103.500" textLength="169" lengthAdjust="spacingAndGlyphs">Our product is a new CRM platform to help businesses manage customer</text>
<text x="37" y="112.500" textLength="184" lengthAdjust="spacingAndGlyphs">relationships. We want to help our customers get set up quickly and easily, so we</text>
<text x="37" y="121.500" textLength="175" lengthAdjust="spacingAndGlyphs">created a step-by-step guide to guide them through the onboarding process.</text>
</g>
</svg></div>
<div class="c" style="left:1578px;top:745px;height:136px"><svg viewBox="0 0 261 137">
<rect width="261" height="137" fill="#fef4e8"/>
<svg width="98" height="137" viewBox="0 0 98 137"><rect width="98" height="137" fill="url(#g26)"/><g filter="url(#b)">
<path d="M-3 20L8 14 14 30 18 50 14 70 -3 75z" fill="#d89a60"/>
<path d="M14 72C18 55 30 45 45 25L70 8C72 30 85 55 96 88L90 90C80 65 65 42 50 30 35 45 25 60 20 80z" fill="#ecece6"/>
<path d="M20 80C30 60 40 45 50 30 65 42 80 65 90 90V140H20z" fill="#dba878"/>
<path d="M20 140C25 110 40 100 50 92 62 88 70 100 75 110 85 115 92 125 94 140z" fill="#f0d2b0"/><path d="M40 115C55 95 70 100 90 120" stroke="#c48a58" stroke-width="1.500" fill="none"/>
<path d="M70 5C85 5 95 30 101 70V100C90 70 82 35 70 5z" fill="#d8d0c4"/><path d="M60 0C70 5 75 20 72 35" stroke="#e8c8a8" stroke-width="3" fill="none"/></g></svg>
<text class="f" x="111.500" y="65" font-size="8.500" fill="#6a655c" textLength="96" lengthAdjust="spacingAndGlyphs">The Benefits of Digital</text>
<text class="f" x="111.500" y="77" font-size="8.500" fill="#6a655c" textLength="44" lengthAdjust="spacingAndGlyphs">Marketing</text>
</svg></div>

<!-- labels -->
<div class="l" style="left:415px;top:212px">Startup Pitch Deck</div>
<div class="l" style="left:706px;top:212px">Company Fact Sheet</div>
<div class="l" style="left:997px;top:212px">Deal Review</div>
<div class="l" style="left:1287px;top:212px">Launch Briefing</div>
<div class="l" style="left:1578px;top:212px">Quarterly Business Review<br>(QBR)</div>
<div class="l" style="left:415px;top:449px">Personal Portfolio</div>
<div class="l" style="left:706px;top:449px">Sales Deck</div>
<div class="l" style="left:997px;top:449px">Sales Presentation</div>
<div class="l" style="left:1287px;top:449px">Guide</div>
<div class="l" style="left:1578px;top:449px">Webinar</div>
<div class="l" style="left:415px;top:656px">One-Page Site - PR<br>Agency Example</div>
<div class="l" style="left:706px;top:656px">One-Page Site - Executive<br>Coach Example</div>
<div class="l" style="left:997px;top:656px">One-Page Site - Travel<br>Example</div>
<div class="l" style="left:1287px;top:656px">Personal Portfolio Site</div>
<div class="l" style="left:1578px;top:656px">Event Microsite - Picnic<br>Example</div>
<div class="l" style="left:415px;top:892px">Event Microsite - Tech<br>Example</div>
<div class="l" style="left:706px;top:892px">Event Microsite - Tech<br>Example 2</div>
<div class="l" style="left:997px;top:892px">Proposal</div>
<div class="l" style="left:1287px;top:892px">New User Onboarding</div>
<div class="l" style="left:1578px;top:892px">Client Presentation -<br>Digital Marketing Agency<br>Example</div>

<!-- floating button and right scrollbar -->
<div class="a" style="left:1821px;top:901px;width:46px;height:48px;border-radius:50%;background:#fff;box-shadow:0 2px 10px rgba(0,0,0,.18)"></div>
<div class="a" style="left:1891px;top:101px;width:5px;height:866px;background:#f1f1f1"></div>
<div class="a" style="left:1891px;top:405px;width:5px;height:327px;background:#c1c1c1"></div>
<div class="a" style="left:1892px;top:112px;width:0;height:0;border-left:4px solid transparent;border-bottom:4px solid #666"></div>
<div class="a" style="left:1892px;top:960px;width:0;height:0;border-left:4px solid transparent;border-top:4px solid #444"></div>

<!-- watermark -->
<div class="a" style="left:1611px;top:914px;font-size:24px;line-height:30px;color:#fff;white-space:nowrap;letter-spacing:.5px;text-shadow:-1px 0 #555,1px 0 #555,0 -1px #555,0 1px #555;opacity:.85;font-family:'Liberation Sans','Noto Sans CJK SC',sans-serif">掘金技术社区 @ 栈江湖</div>

<!-- sidebar -->
<div class="a" style="left:0;top:101px;width:345px;height:866px;background:#fff"></div>
<div class="a" style="left:345px;top:101px;width:18px;height:866px;background:#f1f1f1"></div>
<div class="a" style="left:346px;top:122px;width:17px;height:610px;background:#c1c1c1"></div>
<div class="a" style="left:350px;top:110px;width:0;height:0;border-left:4.500px solid transparent;border-right:4.500px solid transparent;border-bottom:5px solid #a6a6a6"></div>
<div class="a" style="left:350px;top:956px;width:0;height:0;border-left:4.500px solid transparent;border-right:4.500px solid transparent;border-top:5px solid #505050"></div>

<div class="a" style="left:25px;top:126px;width:40px;height:40px;border-radius:50%;background:#c27be0"></div>
<div class="t" style="left:25px;top:134px;width:40px;text-align:center;color:#fff;font-size:17px">H</div>
<div class="a" style="left:72px;top:122px;width:178px;height:22px;filter:blur(2.500px);overflow:visible">
<div class="a" style="left:0;top:2px;width:175px;height:16px;background:#ececec"></div>
<div class="a" style="left:12px;top:9px;width:14px;height:12px;background:#b0b0b0"></div>
<div class="a" style="left:55px;top:9px;width:30px;height:11px;background:#ccc"></div>
<div class="a" style="left:120px;top:10px;width:34px;height:11px;background:#a8a8a8"></div>
</div>
<div class="a" style="left:75px;top:150px;width:44px;height:17px;background:#f7f6f5;border-radius:3px"></div>
<div class="t" style="left:80px;top:146px;font-size:14px;font-weight:700;color:#4a4a4a">FREE</div>
<svg class="a" style="left:281px;top:136px" width="20" height="20" viewBox="0 0 20 20" fill="none" stroke="#333" stroke-width="1.800" stroke-linecap="round" stroke-linejoin="round"><path d="M4 7l6 6.500L16 7"/></svg>

<div class="a" style="left:16px;top:201px;width:242px;height:50px;border:1px solid #e3e1df;border-radius:8px;background:#fff"></div>
<svg class="a" style="left:28px;top:214px" width="24" height="24" viewBox="0 0 24 24" fill="none" stroke="#b4b2b0" stroke-width="1.800" stroke-linecap="round"><circle cx="10.500" cy="10.500" r="7"/><path d="M16 16l5.500 5.500"/></svg>
<div class="t" style="left:66px;top:214px;font-size:20px;color:#9c9a98;-webkit-text-stroke:.15px #9c9a98">跳转至</div>
<div class="a" style="left:187px;top:214px;width:63px;height:25px;background:#f7f6f5;border-radius:5px"></div>
<div class="t" style="left:191px;top:215px;font-size:17px;color:#a5a3a1;letter-spacing:.3px;-webkit-text-stroke:.2px #a5a3a1">Ctrl+K</div>
<div class="a" style="left:269px;top:201px;width:50px;height:50px;border:1px solid #e3e1df;border-radius:8px;background:#faf9f8"></div>
<svg class="a" style="left:281px;top:213px" width="26" height="26" viewBox="0 0 26 26" fill="none" stroke="#2e2e2e" stroke-width="1.900" stroke-linejoin="round" stroke-linecap="round"><path d="M3.500 11.500L22.500 5.500V20.500L3.500 16z"/><path d="M8 17v3.500l6 1.200 1-3"/></svg>

<svg class="ic" style="top:280px" viewBox="0 0 24 24"><rect x="3.500" y="9" width="17" height="12" rx="2"/><path d="M5.500 5.800h13M7.500 2.800h9"/></svg>
<div class="nav" style="top:280px;letter-spacing:.5px">Gammas</div>
<svg class="ic" style="top:325px" viewBox="0 0 24 24"><circle cx="9" cy="7.500" r="3.800"/><path d="M1.500 20.500c0-4 3-7 7.500-7s7.500 3 7.500 7z"/><circle cx="17" cy="8" r="3.200" fill="#6e6e6e"/><path d="M18.500 13.500c2.800.6 4.500 3 4.500 7h-4"/></svg>
<div class="nav" style="top:325px">与您共享</div>
<svg class="ic" style="top:370px" viewBox="0 0 24 24"><circle cx="12" cy="12" r="8.500"/><ellipse cx="12" cy="12" rx="3.800" ry="8.500"/><path d="M3.500 12h17M4.500 8h15M4.500 16h15"/></svg>
<div class="nav" style="top:370px">网站</div>
<div class="a" style="left:253px;top:366px;width:51px;height:30px;background:#d9d4fb;border-radius:4px"></div>
<div class="t" style="left:258px;top:369px;font-size:13.800px;font-weight:700;color:#1e0a72">测试版</div>
<svg class="ic" style="top:415px;stroke:none;fill:#6e6e6e" viewBox="0 0 24 24"><path d="M12 3.500C12.800 9 15 11.200 20.500 12 15 12.800 12.800 15 12 20.500 11.200 15 9 12.800 3.500 12 9 11.200 11.200 9 12 3.500z"/></svg>
<div class="nav" style="top:415px">人工智能图像</div>
<div class="a" style="left:261px;top:413px;width:44px;height:26px;background:#c6f4d6;border-radius:4px"></div>
<div class="t" style="left:266px;top:414px;font-size:14px;font-weight:700;color:#1f5c3e">NEW</div>

<div class="t" style="left:20px;top:478px;font-size:17px;font-weight:700;color:#8b8887">文件夹</div>
<div class="a" style="left:290px;top:473px;width:28px;height:28px;border-radius:50%;background:#fff;box-shadow:0 2px 5px rgba(0,0,0,.2),0 0 1px rgba(0,0,0,.2)"></div>
<svg class="a" style="left:297px;top:480px" width="14" height="14" viewBox="0 0 14 14" stroke="#333" stroke-width="1.300"><path d="M7 1v12M1 7h12"/></svg>
<div class="a" style="left:14px;top:517px;width:305px;height:129px;background:#f9f7f7;border-radius:6px"></div>
<div class="t" style="left:14px;top:538px;width:305px;text-align:center;font-size:17.500px;color:#3a3a3a;-webkit-text-stroke:.15px #3a3a3a">按主题组织您的 <span style="letter-spacing:.8px">gammas</span> 并与您</div>
<div class="t" style="left:14px;top:566px;width:305px;text-align:center;font-size:17.500px;color:#3a3a3a;-webkit-text-stroke:.15px #3a3a3a">的团队分享</div>
<div class="t" style="left:14px;top:602px;width:305px;text-align:center;font-size:17.500px;font-weight:700;color:#2a0acb">创建或加入文件夹</div>

<div class="a" style="left:15px;top:666px;width:306px;height:1px;background:#ecebea"></div>
<div class="a" style="left:15px;top:682px;width:304px;height:40px;background:#e9e7fd;border-radius:8px"></div>
<svg class="ic" style="top:691px;stroke:#2b0fd6;stroke-width:1.900" viewBox="0 0 24 24"><path d="M15.500 2.500L6.500 13.500h5.500l-2 8 8.500-11.500h-5.500z"/></svg>
<div class="nav" style="top:691px;font-weight:700;color:#2b0fd6;-webkit-text-stroke:0">模板</div>
<svg class="ic" style="top:737px" viewBox="0 0 24 24"><path d="M2.500 5h7c1.500 0 2.500 1 2.500 2v12.500c0-1-1-1.500-2.500-1.500h-7zM21.500 5h-7c-1.500 0-2.500 1-2.500 2v12.500c0-1 1-1.500 2.500-1.500h7z"/></svg>
<div class="nav" style="top:737px">灵感</div>
<svg class="ic" style="top:782px" viewBox="0 0 24 24"><path d="M12 3.500a8.500 8.500 0 1 0 0 17c1.500 0 2-1 1.600-2-.6-1.500.4-3 2-3h2.400c1.800 0 2.500-1.200 2.500-3.500 0-4.800-3.800-8.500-8.500-8.500z"/><circle cx="7.500" cy="12" r=".9" fill="#6e6e6e"/><circle cx="9" cy="8" r=".9" fill="#6e6e6e"/><circle cx="13.500" cy="7" r=".9" fill="#6e6e6e"/></svg>
<div class="nav" style="top:782px">主题</div>
<svg class="ic" style="top:827px" viewBox="0 0 24 24"><path d="M5 18V5c0-1 .8-2 2-2h12v19H7c-1.200 0-2-.8-2-2s.8-2 2-2h12"/><path d="M9 13.500L12 6.500l3 7M10 11.500h4"/></svg>
<div class="nav" style="top:827px">自定义字体</div>
<svg class="ic" style="top:871px" viewBox="0 0 24 24"><path d="M5 7h14M9.500 7V3.500h5V7M6.500 7l.8 12.500c0 1 .7 1.500 1.700 1.500h6c1 0 1.700-.5 1.700-1.500L17.500 7"/></svg>
<div class="nav" style="top:872px">垃圾箱</div>
<div class="a" style="left:15px;top:922px;width:306px;height:1px;background:#ecebea"></div>
<svg class="ic" style="top:945px" viewBox="0 0 24 24"><ellipse cx="10" cy="10" rx="7" ry="3"/><path d="M3 10v8c0 1.700 3 3 7 3s7-1.300 7-3v-8M3 14c0 1.700 3 3 7 3s7-1.300 7-3"/><path d="M9 4.500C9.500 3 12 2 15 2c3.500 0 6 1.200 6 3v8c0 1-1 2-4 2.500M17 7c2 0 3.500-.8 4-2"/></svg>
<div class="nav" style="top:945px">500 积分</div>

<!-- browser chrome -->
<div class="a" style="left:0;top:0;width:1896px;height:101px;background:#333"></div>
<div class="a" style="left:0;top:8px;width:38px;height:42px;border-radius:19px;background:#3f3f3f"></div>
<div class="a" style="left:140px;top:8px;width:1372px;height:42px;border-radius:21px;background:#434343"></div>
<div class="a" style="left:147px;top:14px;width:28px;height:30px;border-radius:50%;background:#2b2b2b"></div>
<svg class="a" style="left:0;top:0" width="175" height="56" viewBox="0 0 175 56" fill="none" stroke-linecap="round" stroke-linejoin="round">
<path d="M25 29H11M17 22l-7 7 7 7" stroke="#c4c4c4" stroke-width="1.800"/>
<path d="M55 29h14M63 22l7 7-7 7" stroke="#777" stroke-width="1.800"/>
<path d="M114 24a8 8 0 1 0 1.500 7M114 19v6h-6" stroke="#c4c4c4" stroke-width="1.800"/>
<circle cx="157" cy="24" r="2.500" stroke="#e8e8e8" stroke-width="1.500"/><path d="M163 24h6M154 33h6" stroke="#e8e8e8" stroke-width="1.500"/><circle cx="166" cy="33" r="2.500" stroke="#e8e8e8" stroke-width="1.500"/>
</svg>
<div class="t" style="left:186px;top:17px;font-size:19.200px;color:#fff;letter-spacing:.05px">gamma.app<span style="color:#b9b9b9">/#templates</span></div>

<svg class="a" style="left:1430px;top:16px" width="460" height="34" viewBox="0 0 460 34" fill="none" stroke-linecap="round" stroke-linejoin="round">
<path d="M11 5.500H4a1 1 0 0 0-1 1v14a1 1 0 0 0 1 1h17a1 1 0 0 0 1-1V15M8 25.500h9M12.500 21.500v4" stroke="#c7c7c7" stroke-width="1.900"/><path d="M18 3v9M14.500 9l3.500 3.500 3.500-3.500" stroke="#c7c7c7" stroke-width="1.900"/>
<path d="M52 4.500l2.700 6 6.500.7-4.800 4.400 1.300 6.400-5.700-3.200-5.700 3.200 1.300-6.400-4.800-4.400 6.500-.7z" stroke="#c7c7c7" stroke-width="1.800"/>
<ellipse cx="115" cy="13" rx="10.500" ry="11" fill="#0a3a9e"/><path d="M115 6l6 12h-12z" fill="#222a3e"/>
<g transform="translate(160 13) scale(1.300) translate(-160 -13)"><circle cx="160" cy="12" r="8" fill="#2e6a78"/><circle cx="155.500" cy="13" r="3.200" fill="#f0e8e0" stroke="#c04030" stroke-width="1.200"/><circle cx="164.500" cy="13" r="3.200" fill="#f0e8e0" stroke="#c04030" stroke-width="1.200"/><path d="M155 19h10l-1.500 4h-7z" fill="#1c2228"/></g>
<g transform="translate(205 13) scale(1.200) translate(-205 -13)"><path d="M201 2.500h7l5 5v11l-5 5h-7l-5-5v-11z" fill="#d6151e"/><path d="M202 19c-2-1.500-3.500-4-3.500-6l1.500-.5 1 1.500V7.500l1.300 0 .5 4V6l1.500 0 .4 5.500V6.500l1.500.2.200 5 .8-3.500 1.400.3-.6 8c-.5 2-1.500 3-3 3z" fill="#fff"/></g>
<path d="M242 21V13a8.500 8.500 0 0 1 17 0v1" stroke="#9cc8ee" stroke-width="3.500"/>
<path d="M295 4h-6c-1 0-2 1-2 2v5h2.500c2 0 2 4 0 4H287v5c0 1 1 2 2 2h6v-2.500c0-2 4-2 4 0V22h1c1 0 2-1 2-2v-5c2.500 0 2.500-4 0-4V6c0-1-1-2-2-2h-1v2c0 2-4 2-4 0z" stroke="#b8b8b8" stroke-width="1.800"/>
<path d="M329 3v19" stroke="#565656" stroke-width="1.500"/>
<path d="M362 4v13M356.500 12l5.500 5.500 5.500-5.500M352 19v2.500c0 1 .6 2 2 2h16c1.400 0 2-1 2-2V19" stroke="#b8b8b8" stroke-width="2"/>
<circle cx="407" cy="13" r="12" fill="#e8e8e8"/><path d="M400 11c3-3 5-4 7-3l-3 4 5-4-1 3 5-3" stroke="#c8403c" stroke-width="1.300"/><circle cx="410" cy="19" r="1" fill="#555"/>
<circle cx="452" cy="5" r="2" fill="#c7c7c7"/><circle cx="452" cy="13" r="2" fill="#c7c7c7"/><circle cx="452" cy="21" r="2" fill="#c7c7c7"/>
</svg>
<div class="a" style="left:1676px;top:30px;width:22px;height:17px;background:#e5a83c;border-radius:4px"></div>
<div class="t" style="left:1676px;top:27px;width:22px;text-align:center;font-size:14px;color:#1f1f1f;letter-spacing:-.2px">13</div>

<!-- bookmarks -->
<svg class="fd" style="left:8px" viewBox="0 0 20 20" fill="none" stroke="#c8c8c8" stroke-width="1.500" stroke-linejoin="round"><path d="M2 4.500c0-.6.4-1 1-1h4.500l2 2H17c.6 0 1 .4 1 1V16c0 .6-.4 1-1 1H3c-.6 0-1-.4-1-1z"/></svg><div class="bm" style="left:37px">URL</div>
<svg class="fd" style="left:88px" viewBox="0 0 20 20" fill="none" stroke="#c8c8c8" stroke-width="1.500" stroke-linejoin="round"><path d="M2 4.500c0-.6.4-1 1-1h4.500l2 2H17c.6 0 1 .4 1 1V16c0 .6-.4 1-1 1H3c-.6 0-1-.4-1-1z"/></svg><div class="bm" style="left:119px">技术类</div>
<svg class="fd" style="left:186px" viewBox="0 0 20 20" fill="none" stroke="#c8c8c8" stroke-width="1.500" stroke-linejoin="round"><path d="M2 4.500c0-.6.4-1 1-1h4.500l2 2H17c.6 0 1 .4 1 1V16c0 .6-.4 1-1 1H3c-.6 0-1-.4-1-1z"/></svg><div class="bm" style="left:216px">非技术类</div>
<svg class="fd" style="left:298px" viewBox="0 0 20 20" fill="none" stroke="#c8c8c8" stroke-width="1.500" stroke-linejoin="round"><path d="M2 4.500c0-.6.4-1 1-1h4.500l2 2H17c.6 0 1 .4 1 1V16c0 .6-.4 1-1 1H3c-.6 0-1-.4-1-1z"/></svg><div class="bm" style="left:329px">电子印章</div>
<svg class="fd" style="left:411px" viewBox="0 0 20 20" fill="none" stroke="#c8c8c8" stroke-width="1.500" stroke-linejoin="round"><path d="M2 4.500c0-.6.4-1 1-1h4.500l2 2H17c.6 0 1 .4 1 1V16c0 .6-.4 1-1 1H3c-.6 0-1-.4-1-1z"/></svg><div class="bm" style="left:441px">技术栈</div>
<svg class="fd" style="left:508px" viewBox="0 0 20 20" fill="none" stroke="#c8c8c8" stroke-width="1.500" stroke-linejoin="round"><path d="M2 4.500c0-.6.4-1 1-1h4.500l2 2H17c.6 0 1 .4 1 1V16c0 .6-.4 1-1 1H3c-.6 0-1-.4-1-1z"/></svg><div class="bm" style="left:538px">文章</div>
<svg class="fd" style="left:591px" viewBox="0 0 20 20" fill="none" stroke="#c8c8c8" stroke-width="1.500" stroke-linejoin="round"><path d="M2 4.500c0-.6.4-1 1-1h4.500l2 2H17c.6 0 1 .4 1 1V16c0 .6-.4 1-1 1H3c-.6 0-1-.4-1-1z"/></svg><div class="bm" style="left:621px">活动类</div>
<svg class="fd" style="left:688px" viewBox="0 0 20 20" fill="none" stroke="#c8c8c8" stroke-width="1.500" stroke-linejoin="round"><path d="M2 4.500c0-.6.4-1 1-1h4.500l2 2H17c.6 0 1 .4 1 1V16c0 .6-.4 1-1 1H3c-.6 0-1-.4-1-1z"/></svg><div class="bm" style="left:718px">社区&amp;博客</div>
<svg class="fd" style="left:815px" viewBox="0 0 20 20" fill="none" stroke="#c8c8c8" stroke-width="1.500" stroke-linejoin="round"><path d="M2 4.500c0-.6.4-1 1-1h4.500l2 2H17c.6 0 1 .4 1 1V16c0 .6-.4 1-1 1H3c-.6 0-1-.4-1-1z"/></svg><div class="bm" style="left:845px">Ing...</div>
</body>
</html>
